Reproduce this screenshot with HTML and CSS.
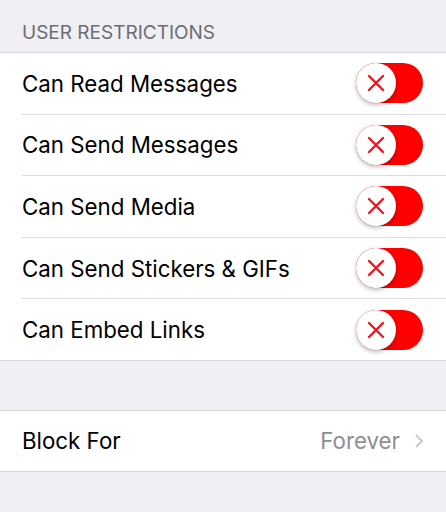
FILE: index.html
```html
<!DOCTYPE html>
<html>
<head>
<meta charset="utf-8">
<link rel="stylesheet" href="styles.css">
</head>
<body>
<div class="page">
  <div class="section-header">USER RESTRICTIONS</div>
  <div class="group">
    <div class="row"><span class="label">Can Read Messages</span><span class="toggle"><span class="knob"><svg viewBox="0 0 20 20" width="20" height="20"><path d="M3 3L17 17M17 3L3 17" stroke="#f0141e" stroke-width="2.4" stroke-linecap="round"/></svg></span></span></div>
    <div class="row"><span class="label">Can Send Messages</span><span class="toggle"><span class="knob"><svg viewBox="0 0 20 20" width="20" height="20"><path d="M3 3L17 17M17 3L3 17" stroke="#f0141e" stroke-width="2.4" stroke-linecap="round"/></svg></span></span></div>
    <div class="row"><span class="label">Can Send Media</span><span class="toggle"><span class="knob"><svg viewBox="0 0 20 20" width="20" height="20"><path d="M3 3L17 17M17 3L3 17" stroke="#f0141e" stroke-width="2.4" stroke-linecap="round"/></svg></span></span></div>
    <div class="row"><span class="label">Can Send Stickers &amp; GIFs</span><span class="toggle"><span class="knob"><svg viewBox="0 0 20 20" width="20" height="20"><path d="M3 3L17 17M17 3L3 17" stroke="#f0141e" stroke-width="2.4" stroke-linecap="round"/></svg></span></span></div>
    <div class="row"><span class="label">Can Embed Links</span><span class="toggle"><span class="knob"><svg viewBox="0 0 20 20" width="20" height="20"><path d="M3 3L17 17M17 3L3 17" stroke="#f0141e" stroke-width="2.4" stroke-linecap="round"/></svg></span></span></div>
  </div>
  <div class="group second">
    <div class="row"><span class="label">Block For</span><span class="value">Forever<svg class="chev" viewBox="0 0 10 16" width="10" height="16"><path d="M2 2L8 8L2 14" fill="none" stroke="#c7c7cc" stroke-width="1.8"/></svg></span></div>
  </div>
</div>
</body>
</html>
```
FILE: styles.css
```css
html, body {
  margin: 0;
  padding: 0;
  background: #efeff4;
}
.page {
  width: 446px;
  height: 512px;
  font-family: "Inter", "Roboto", sans-serif;
  overflow: hidden;
}
.section-header {
  height: 52px;
  box-sizing: border-box;
  padding: 22px 0 0 22px;
  font-size: 19px;
  line-height: 22px;
  color: #6d6d72;
}
.group {
  background: #fff;
  border-top: 1px solid #d8d8dc;
  border-bottom: 1px solid #d8d8dc;
}
.group.second {
  margin-top: 49px;
}
.row {
  height: 60.6px;
  display: flex;
  align-items: center;
  justify-content: space-between;
  margin-left: 22px;
  padding-right: 22px;
  border-bottom: 1px solid #dcdce0;
}
.row:last-child {
  border-bottom: none;
  height: 60.5px;
}
.group.second .row {
  height: 60px;
}
.label {
  font-size: 22.3px;
  color: #000;
}
.toggle {
  width: 67px;
  height: 40px;
  border-radius: 20px;
  background: #ff0000;
  position: relative;
  margin-right: 1px;
}
.knob {
  position: absolute;
  left: 0;
  top: 0;
  width: 40px;
  height: 40px;
  border-radius: 50%;
  background: #fff;
  box-shadow: 0 2px 4px rgba(0,0,0,0.25), 0 0 0 0.5px rgba(0,0,0,0.08);
  display: flex;
  align-items: center;
  justify-content: center;
}
.value {
  font-size: 22.3px;
  color: #8e8e93;
  display: flex;
  align-items: center;
  gap: 14px;
}
.chev { margin-right: 0; }
```
